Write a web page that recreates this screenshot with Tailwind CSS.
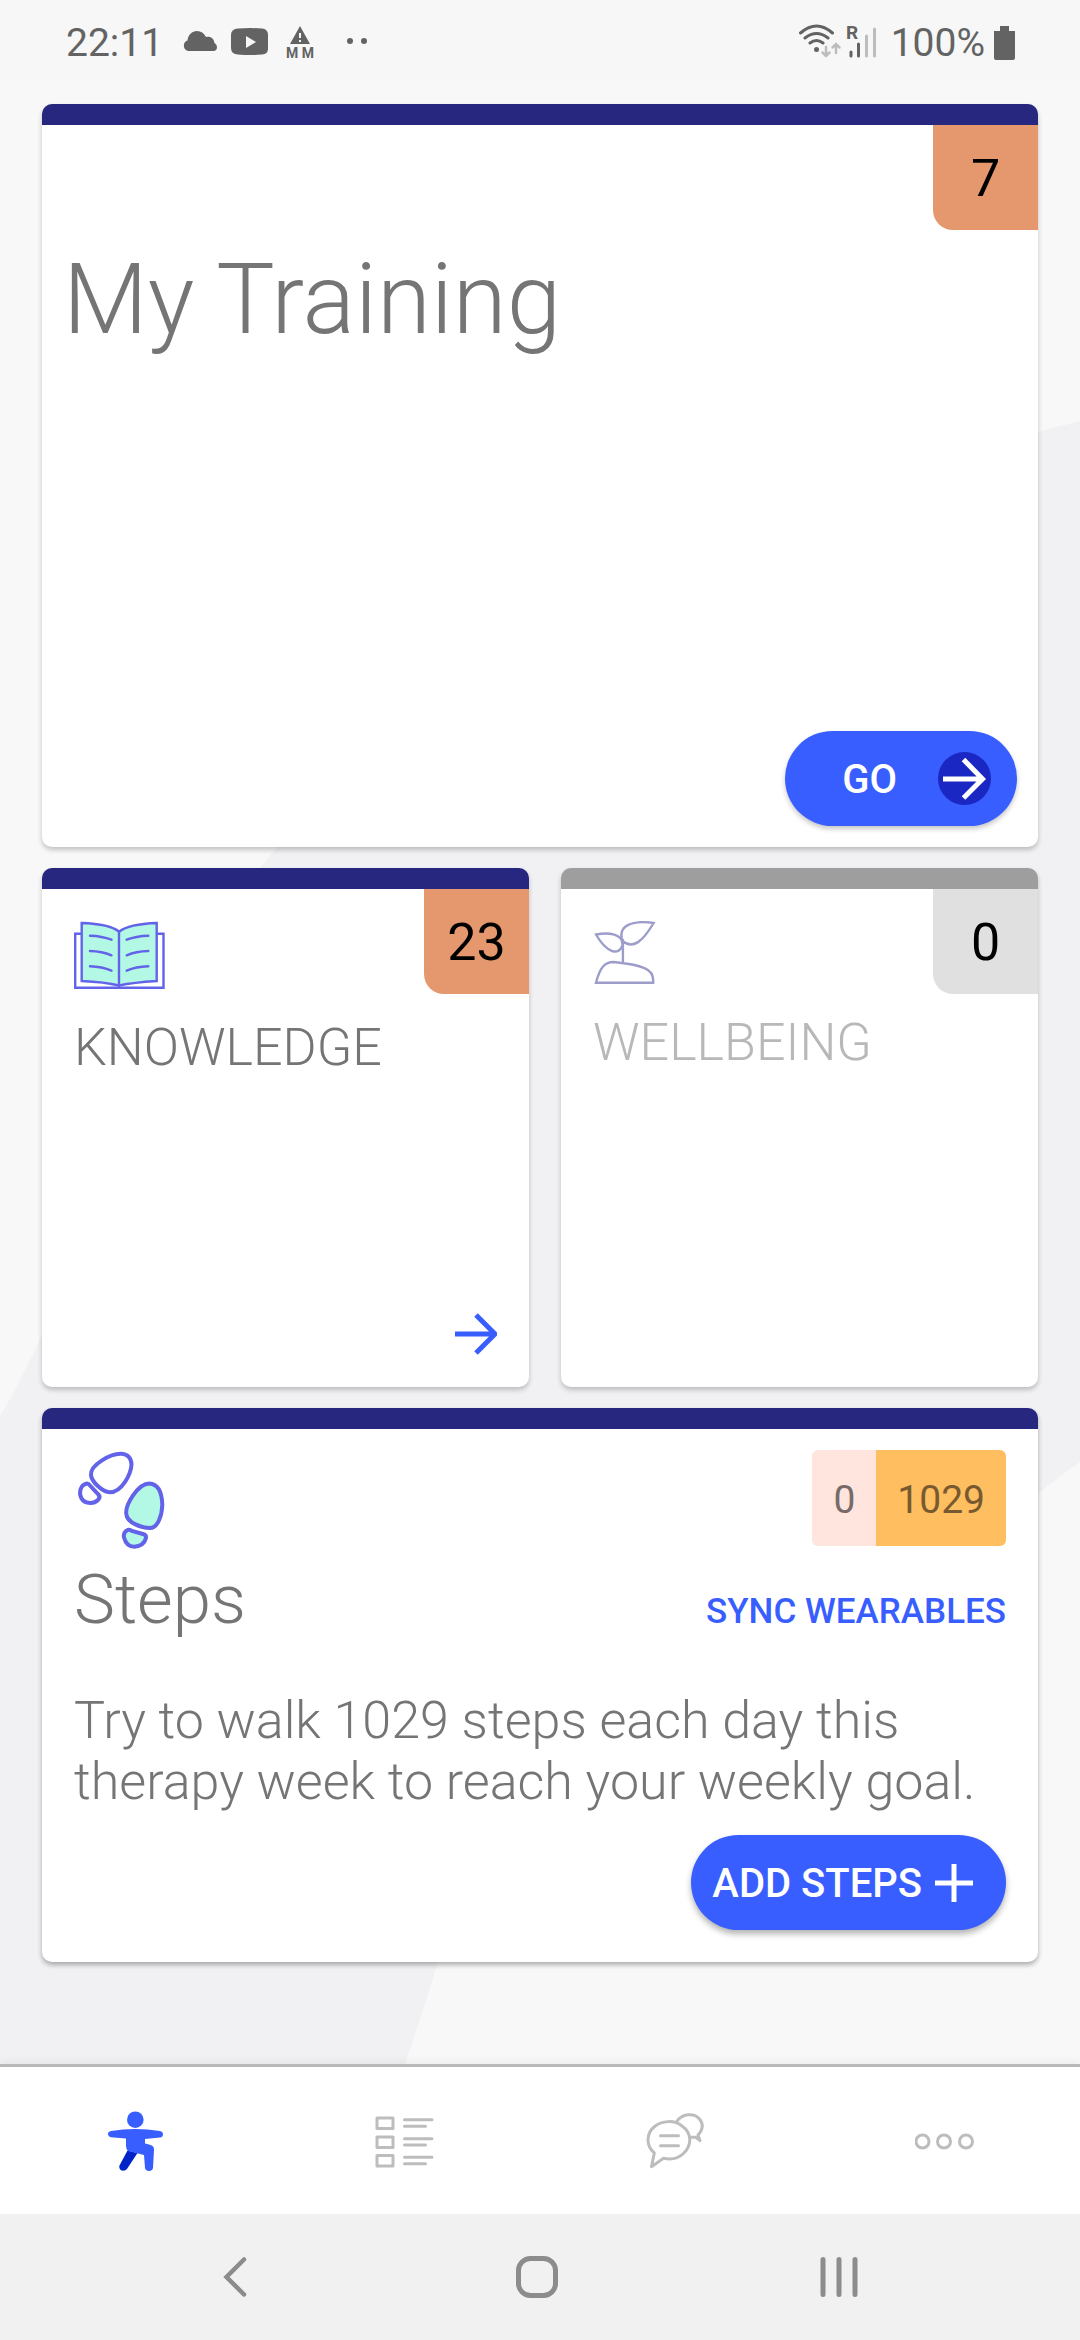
<!DOCTYPE html>
<html lang="en">
<head>
<meta charset="utf-8">
<meta name="viewport" content="width=device-width, initial-scale=1">
<title>My Training</title>
<script src="https://cdn.jsdelivr.net/npm/@tailwindcss/browser@4"></script>
</head>
<body class="relative flex min-h-screen flex-col bg-[#f8f8f8] font-['Roboto',sans-serif] text-[#757575]">
  <!-- Backdrop curve -->
  <svg class="absolute inset-0 -z-10 h-full w-full" viewBox="0 0 1080 2340" preserveAspectRatio="none" aria-hidden="true">
    <path fill="#f1f1f4" d="M1080 421C760 500 460 640 275 850C150 990 90 1270 0 1416V2340H360Q385 2140 405 2064Q425 2005 438 1962C560 1700 850 1650 1040 1492Q1060 1476 1080 1462Z"/>
  </svg>

  <!-- Status bar -->
  <header class="flex h-[82px] items-center justify-between bg-[#f7f7f7] pt-[4px] pr-[65px] pl-[66px] text-[39px] leading-[48px] text-[#636363]">
    <div class="flex items-center">
      <time>22:11</time>
      <svg class="ml-[18px] h-[40px] w-[190px]" viewBox="180 24 190 40" fill="#636363" aria-hidden="true">
        <path d="M187 52a5.500 5.500 0 0 1-.5-10.500C187 36 191 32 196 32c4 0 7 2 9 6c5-1 8 2 8.500 6c3.500 2 3.500 8-1 8z"/>
        <path d="M237 29.500q12-1 24 0q6 .5 6 6.500v14q0 5-6 5.500q-12 1-24 0q-7-.5-7-6.500V36q0-6 7-6.500zM245 37v12l10-6z" fill-rule="evenodd"/>
        <path d="M299 27l10 18h-20zM298 34v5h2v-5zM298 41v2h2v-2z" fill-rule="evenodd"/>
        <text x="299" y="59" text-anchor="middle" font-size="14" font-weight="700" xml:space="preserve">M M</text>
        <circle cx="349" cy="42" r="3"/><circle cx="363" cy="42" r="3"/>
      </svg>
    </div>
    <div class="flex items-center">
      <svg class="mr-[13px] h-[48px] w-[80px]" viewBox="798 19 80 48" fill="none" stroke="#636363" stroke-width="3" stroke-linecap="round" aria-hidden="true">
        <path d="M800.500 33q16-14 32 0M805 38q11.500-9 23 0M810 43q6.500-5 13 0"/>
        <circle cx="816.500" cy="49.500" r="2.500" fill="#636363" stroke="none"/>
        <path d="M826 47v9M822.500 52.500l3.500 3.500l3.500-3.500M836 53v-9M832.500 47.500l3.500-3.500l3.500 3.500" stroke="#bdbdbd" stroke-width="2.500"/>
        <text x="846" y="39" font-size="19" font-weight="700" fill="#636363" stroke="none">R</text>
        <path d="M851 52v4M858.500 44v12"/>
        <path d="M866.500 36v20M874.500 29v27" stroke="#bdbdbd"/>
      </svg>
      <span>100%</span>
      <svg class="ml-[9px] h-[34px] w-[21px]" viewBox="0 0 21 34" fill="#636363" aria-hidden="true"><path d="M6 0h9v5h6v27q0 2-2 2H2q-2 0-2-2V5h6z"/></svg>
    </div>
  </header>

  <main class="flex flex-1 flex-col gap-[21px] px-[42px] pt-[22px] pb-[102px]">
    <section class="flex min-h-[743px] flex-col rounded-[10px] border-t-[21px] border-[#272780] bg-white shadow-[0_3px_5px_rgba(0,0,0,0.22)]">
      <span class="flex h-[105px] w-[105px] items-center justify-center self-end rounded-bl-[20px] bg-[#e5986d] pt-[3px] text-[52px] text-black">7</span>
      <h1 class="mt-[12px] px-[21px] text-[98px] leading-[116px] font-light">My Training</h1>
      <button class="mt-auto mr-[21px] mb-[21px] flex h-[95px] items-center gap-[41px] self-end rounded-full bg-[#385eff] pr-[26px] pl-[57px] text-[40px] font-medium text-white shadow-[0_3px_5px_rgba(0,0,0,0.22)]">
        <span class="pt-[3px]">GO</span>
        <svg class="h-[53px] w-[53px]" viewBox="0 0 53 53" aria-hidden="true"><circle cx="26.500" cy="26.500" r="26.500" fill="#1a27c2"/><path d="M5 27h38M25.500 7.500L44.500 27L25.500 46" fill="none" stroke="#fff" stroke-width="5"/></svg>
      </button>
    </section>

    <div class="grid grid-cols-[487fr_477fr] gap-[32px]">
      <section class="flex min-h-[519px] flex-col rounded-[10px] border-t-[21px] border-[#272780] bg-white shadow-[0_3px_5px_rgba(0,0,0,0.22)]">
        <div class="flex items-start justify-between pl-[32px]">
          <svg class="mt-[32px] h-[68px] w-[92px]" viewBox="0 0 92 68" fill="none" stroke="#6363e9" stroke-width="2.400" stroke-linecap="round" aria-hidden="true">
            <path d="M7.500 12.700H1.200V66.800H89.500V12.700H83"/>
            <path d="M7.700 2Q36 3 45 10.700Q55 3 82.700 2V60Q59 61.500 45 64.500Q31 61 7.700 60z" fill="#b3f8e4"/>
            <path d="M45 10.700V65M16 14.700Q28 15 37.500 18.700M16 30Q28 30.300 37.500 34.300M16 45.300Q28 45.600 37.500 49.700M74.300 14.700Q62 15 52.700 18.700M74.300 30Q62 30.300 52.700 34.300M74.300 45.300Q62 45.600 52.700 49.700"/>
          </svg>
          <span class="flex h-[105px] w-[105px] items-center justify-center rounded-bl-[20px] bg-[#e5986d] pt-[3px] text-[52px] text-black">23</span>
        </div>
        <h2 class="mt-[24px] px-[32px] text-[52px] leading-[60px] font-light">KNOWLEDGE</h2>
        <a href="#knowledge" aria-label="Open knowledge" class="mt-auto mr-[32px] mb-[32px] self-end">
          <svg class="h-[42px] w-[42px]" viewBox="0 0 42 42" fill="none" stroke="#385eff" stroke-width="5" aria-hidden="true"><path d="M0 21h39M21 2L40 21L21 40"/></svg>
        </a>
      </section>

      <section class="flex min-h-[519px] flex-col rounded-[10px] border-t-[21px] border-[#9e9e9e] bg-white shadow-[0_3px_5px_rgba(0,0,0,0.22)]">
        <div class="flex items-start justify-between pl-[32px]">
          <svg class="mt-[32px] h-[64px] w-[64px]" viewBox="0 0 64 64" fill="none" stroke="#9d9dcb" stroke-width="2.400" aria-hidden="true">
            <path d="M60.600 2C40-1 24 4 29.500 20C40 29 50 20 60.600 2zM3 13.500C16 11 30 13 29.500 24C26 36 13 31 3 13.500zM29.900 18V43M3 61.700C7 46 12 41 20.600 41Q42 43 52 47.300Q61 51 60.200 61.700z"/>
          </svg>
          <span class="flex h-[105px] w-[105px] items-center justify-center rounded-bl-[20px] bg-[#e0e0e0] pt-[3px] text-[52px] text-black">0</span>
        </div>
        <h2 class="mt-[19px] px-[32px] text-[52px] leading-[60px] font-light text-[#b8b8b8]">WELLBEING</h2>
      </section>
    </div>

    <section class="flex flex-col rounded-[10px] border-t-[21px] border-[#272780] bg-white px-[32px] pt-[21px] pb-[32px] shadow-[0_3px_5px_rgba(0,0,0,0.3)]">
      <div class="flex items-start justify-between">
        <svg class="h-[100px] w-[92px]" viewBox="0 0 92 100" fill="none" stroke="#6363e9" stroke-width="4" aria-hidden="true">
          <path d="M17 25C16 15 37 3 47.700 3.700Q57 4.500 57.500 14.500C57 24 48 42 36 42.300C29 42.500 17.500 32 17 25zM12.700 33.500Q6 35 6 43.500C7 51 12 53 16.700 53Q21 53 24 50Q27 47 24 44L16 35.500Q14.500 33.300 12.700 33.500z"/>
          <path d="M52.300 64C51 55 64 33.500 75.300 33.500C85 34 88 44 88.300 55C88 65 84 78 76 78C68 78 53 73 52.300 64zM53.700 80Q49 82 50 87.500C52 95 57 96.700 60.300 96.700C68 96 71 92 72 88Q72.500 85 69 84L58 81Q55.500 79.500 53.700 80z" fill="#b3f8e4"/>
        </svg>
        <div class="flex h-[96px] items-center overflow-hidden rounded-[6px] text-[39px]">
          <span class="flex h-full items-center bg-[#ffe5dd] px-[21px] pt-[4px] text-[#766b68]">0</span>
          <span class="flex h-full items-center bg-[#ffbe60] px-[21px] pt-[4px] text-[#785a30]">1029</span>
        </div>
      </div>
      <div class="mt-[10px] flex items-baseline justify-between">
        <h2 class="text-[69px] leading-[80px] font-light">Steps</h2>
        <button class="text-[35px] leading-[42px] font-medium text-[#385eff]">SYNC WEARABLES</button>
      </div>
      <p class="mt-[50px] text-[52px] leading-[61px] font-light">Try to walk 1029 steps each day this therapy week to reach your weekly goal.</p>
      <button class="mt-[23px] flex h-[95px] items-center gap-[13px] self-end rounded-full bg-[#385eff] pr-[33px] pl-[21px] text-[40px] font-medium text-white shadow-[0_4px_6px_rgba(0,0,0,0.3)]">
        <span class="pt-[3px]">ADD STEPS</span>
        <svg class="h-[38px] w-[38px]" viewBox="0 0 38 38" fill="none" stroke="#fff" stroke-width="5" aria-hidden="true"><path d="M0 19h38M19 0v38"/></svg>
      </button>
    </section>
  </main>

  <nav aria-label="Main" class="grid h-[150px] grid-cols-4 border-t-[3px] border-[#b8b8b8] bg-white shadow-[0_-2px_8px_rgba(0,0,0,0.06)]">
    <a href="#training" aria-label="Training" class="flex items-center justify-center">
      <svg class="h-[60px] w-[60px]" viewBox="0 0 60 60" fill="#385eff" aria-hidden="true">
        <path fill="#0024c8" d="M22.500 39.500L32.500 42L22.300 57.500C19 62 13 59 14.500 54.500z"/>
        <circle cx="30.300" cy="8.700" r="8.300"/>
        <path d="M6 20Q30 16 55 20C59 21 59 26 55 26.500L40 28V32.500C46 34 49 34 49 39L48 57C47.500 61 40.500 61 40 57L39 44L23 40Q21 38 21 35V27.500L6 26.300C2 25.500 2 20.500 6 20z"/>
      </svg>
    </a>
    <a href="#tasks" aria-label="Tasks" class="flex items-center justify-center">
      <svg class="h-[60px] w-[60px]" viewBox="0 0 60 60" fill="none" stroke="#bdbdbd" stroke-width="3" stroke-linecap="round" stroke-linejoin="round" aria-hidden="true">
        <path d="M2 7h16v10.500H2zM2 26h16v10.500H2zM2 44.500h16V55H2zM29.500 8.700h27.500M29.500 15.300h21M29.500 27.700h27.500M29.500 34h21M29.500 46.300h27.500M29.500 52.700h21"/>
      </svg>
    </a>
    <a href="#messages" aria-label="Messages" class="flex items-center justify-center">
      <svg class="h-[60px] w-[60px]" viewBox="0 0 60 60" fill="none" stroke="#bdbdbd" stroke-width="3" stroke-linecap="round" stroke-linejoin="round" aria-hidden="true">
        <path d="M9.300 42C0 34 2 22 9 16C17 9 30 9 37 15C47 22 47 34 39 42Q31 50 18.500 47.300L6.500 55.700zM31.400 11C37 2 49 2 54 7.500C59 13 57.500 19 53 24L55 29.500L50.500 26.300H46M15.500 24.700h18M15.500 34.700h18"/>
      </svg>
    </a>
    <a href="#more" aria-label="More" class="flex items-center justify-center">
      <svg class="h-[60px] w-[60px]" viewBox="0 0 60 60" fill="none" stroke="#bdbdbd" stroke-width="3" aria-hidden="true">
        <circle cx="7.500" cy="30.500" r="6.500"/><circle cx="29" cy="30.500" r="6.500"/><circle cx="51" cy="30.500" r="6.500"/>
      </svg>
    </a>
  </nav>

  <footer class="grid h-[126px] grid-cols-3 bg-[#f1f1f1] pr-[90px] pl-[84px]">
    <button aria-label="Back" class="flex items-center justify-center">
      <svg class="h-[42px] w-[42px]" viewBox="0 0 42 42" fill="none" stroke="#8c8c8c" stroke-width="4.500" stroke-linecap="round" aria-hidden="true"><path d="M30 3.500L12.500 21L30 38.500"/></svg>
    </button>
    <button aria-label="Home" class="flex items-center justify-center">
      <svg class="h-[42px] w-[42px]" viewBox="0 0 42 42" fill="none" stroke="#8c8c8c" stroke-width="5" aria-hidden="true"><rect x="2.500" y="2.500" width="37" height="37" rx="12"/></svg>
    </button>
    <button aria-label="Recent apps" class="flex items-center justify-center">
      <svg class="h-[42px] w-[42px]" viewBox="0 0 42 42" fill="none" stroke="#8c8c8c" stroke-width="5" stroke-linecap="round" aria-hidden="true"><path d="M5 3.500v35M21 3.500v35M37 3.500v35"/></svg>
    </button>
  </footer>
</body>
</html>
